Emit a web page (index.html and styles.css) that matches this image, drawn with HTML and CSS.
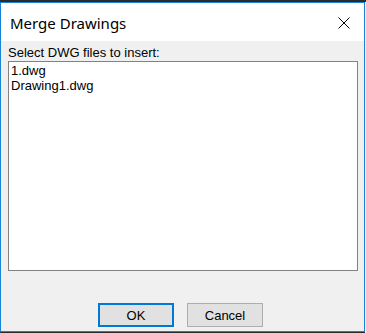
FILE: index.html
```html
<!DOCTYPE html>
<html>
<head>
<meta charset="utf-8">
<link rel="stylesheet" href="styles.css">
</head>
<body>
<div class="topstrip"></div>
<div class="window">
  <div class="titlebar">
    <span class="title">Merge Drawings</span>
    <svg class="close" width="12" height="12" viewBox="0 0 12 12"><path d="M0.5 0.5 L11.5 11.5 M11.5 0.5 L0.5 11.5" stroke="#000" stroke-width="1" fill="none"/></svg>
  </div>
  <div class="content">
    <div class="label">Select DWG files to insert:</div>
    <div class="listbox">
      <div class="item">1.dwg</div>
      <div class="item">Drawing1.dwg</div>
    </div>
    <div class="buttons">
      <button class="btn btn-default">OK</button>
      <button class="btn">Cancel</button>
    </div>
  </div>
</div>
<div class="bottomstrip"></div>
</body>
</html>
```
FILE: styles.css
```css
html, body {
  margin: 0;
  padding: 0;
}
body {
  width: 366px;
  height: 333px;
  background: #f0f0f0;
  overflow: hidden;
  font-family: "Liberation Sans", Arial, sans-serif;
  font-size: 13px;
  color: #000;
}
.topstrip {
  height: 2px;
  background: #2b2b2b;
}
.bottomstrip {
  height: 1px;
  width: 365px;
  background: #2b2b2b;
}
.window {
  width: 363px;
  height: 328px;
  border: 1px solid #1883d7;
  display: flex;
  flex-direction: column;
  background: #f0f0f0;
}
.titlebar {
  height: 38px;
  background: #fff;
  display: flex;
  align-items: center;
  justify-content: space-between;
  padding: 0 14px 0 9px;
  flex: none;
}
.title {
  font-family: "Noto Sans", "Open Sans", sans-serif;
  font-size: 15px;
  color: #000;
  margin-top: 1px;
}
.close {
  display: block;
  margin-top: 1px;
}
.content {
  flex: 1;
  display: flex;
  flex-direction: column;
  padding: 4px 6px 4px 7px;
}
.label {
  line-height: 16px;
}
.listbox {
  border: 1px solid #828282;
  background: #fff;
  padding: 1px 2px;
  line-height: 15px;
  box-sizing: border-box;
  height: 210px;
}
.buttons {
  margin-top: 32px;
  display: flex;
  gap: 13px;
  padding-left: 90px;
}
.btn {
  width: 76px;
  height: 24px;
  box-sizing: border-box;
  background: #e1e1e1;
  border: 1px solid #adadad;
  font-family: "Liberation Sans", Arial, sans-serif;
  font-size: 13px;
  color: #000;
  padding: 0;
  margin: 0;
}
.btn-default {
  border: 2px solid #0078d7;
}
```
